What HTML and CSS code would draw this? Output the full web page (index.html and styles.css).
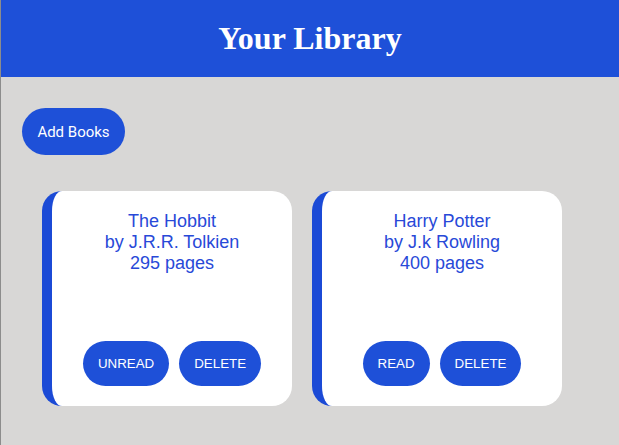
FILE: index.html
```html
<!DOCTYPE html>
<html>
<head>
<meta charset="utf-8">
<link rel="stylesheet" href="styles.css">
</head>
<body>
<header class="top">
  <h1 class="title">Your Library</h1>
</header>
<main class="content">
  <button class="add-btn">Add Books</button>
  <section class="shelf">
    <article class="card">
      <div class="info">
        <p>The Hobbit</p>
        <p>by J.R.R. Tolkien</p>
        <p>295 pages</p>
      </div>
      <div class="actions">
        <button class="pill">UNREAD</button>
        <button class="pill">DELETE</button>
      </div>
    </article>
    <article class="card">
      <div class="info">
        <p>Harry Potter</p>
        <p>by J.k Rowling</p>
        <p>400 pages</p>
      </div>
      <div class="actions">
        <button class="pill">READ</button>
        <button class="pill">DELETE</button>
      </div>
    </article>
  </section>
</main>
</body>
</html>
```
FILE: styles.css
```css
html, body { margin: 0; padding: 0; }
body {
  background: #d8d7d6;
  border-left: 1px solid #8c8c8c;
  min-height: 445px;
  box-sizing: border-box;
  font-family: "Liberation Sans", Arial, sans-serif;
}
.top {
  background: #1e50d8;
  height: 77px;
  display: flex;
  align-items: center;
  justify-content: center;
}
.title {
  margin: 0;
  color: #ffffff;
  font-family: "Liberation Serif", "Times New Roman", serif;
  font-weight: bold;
  font-size: 32px;
}
.content {
  padding: 31px 21px 0;
}
.add-btn {
  background: #1e50d8;
  color: #fff;
  border: none;
  border-radius: 24px;
  width: 103px;
  height: 47px;
  font-family: Roboto, sans-serif;
  font-size: 15px;
  padding: 0;
}
.shelf {
  display: flex;
  gap: 20px;
  padding: 36px 20px 0;
}
.card {
  width: 250px;
  height: 215px;
  box-sizing: border-box;
  background: #fff;
  border-left: 10px solid #1b4ad6;
  border-radius: 20px;
  display: flex;
  flex-direction: column;
  justify-content: space-between;
  padding: 20px 0 20px;
}
.info {
  text-align: center;
  color: #2849d8;
  font-size: 18px;
  line-height: 21px;
}
.info p { margin: 0; }
.actions {
  display: flex;
  justify-content: center;
  gap: 10px;
}
.pill {
  background: #1e50d8;
  color: #fff;
  border: none;
  border-radius: 23px;
  height: 45px;
  padding: 0 15px;
  font-family: "Liberation Sans", Arial, sans-serif;
  font-size: 13.33px;
}
```
